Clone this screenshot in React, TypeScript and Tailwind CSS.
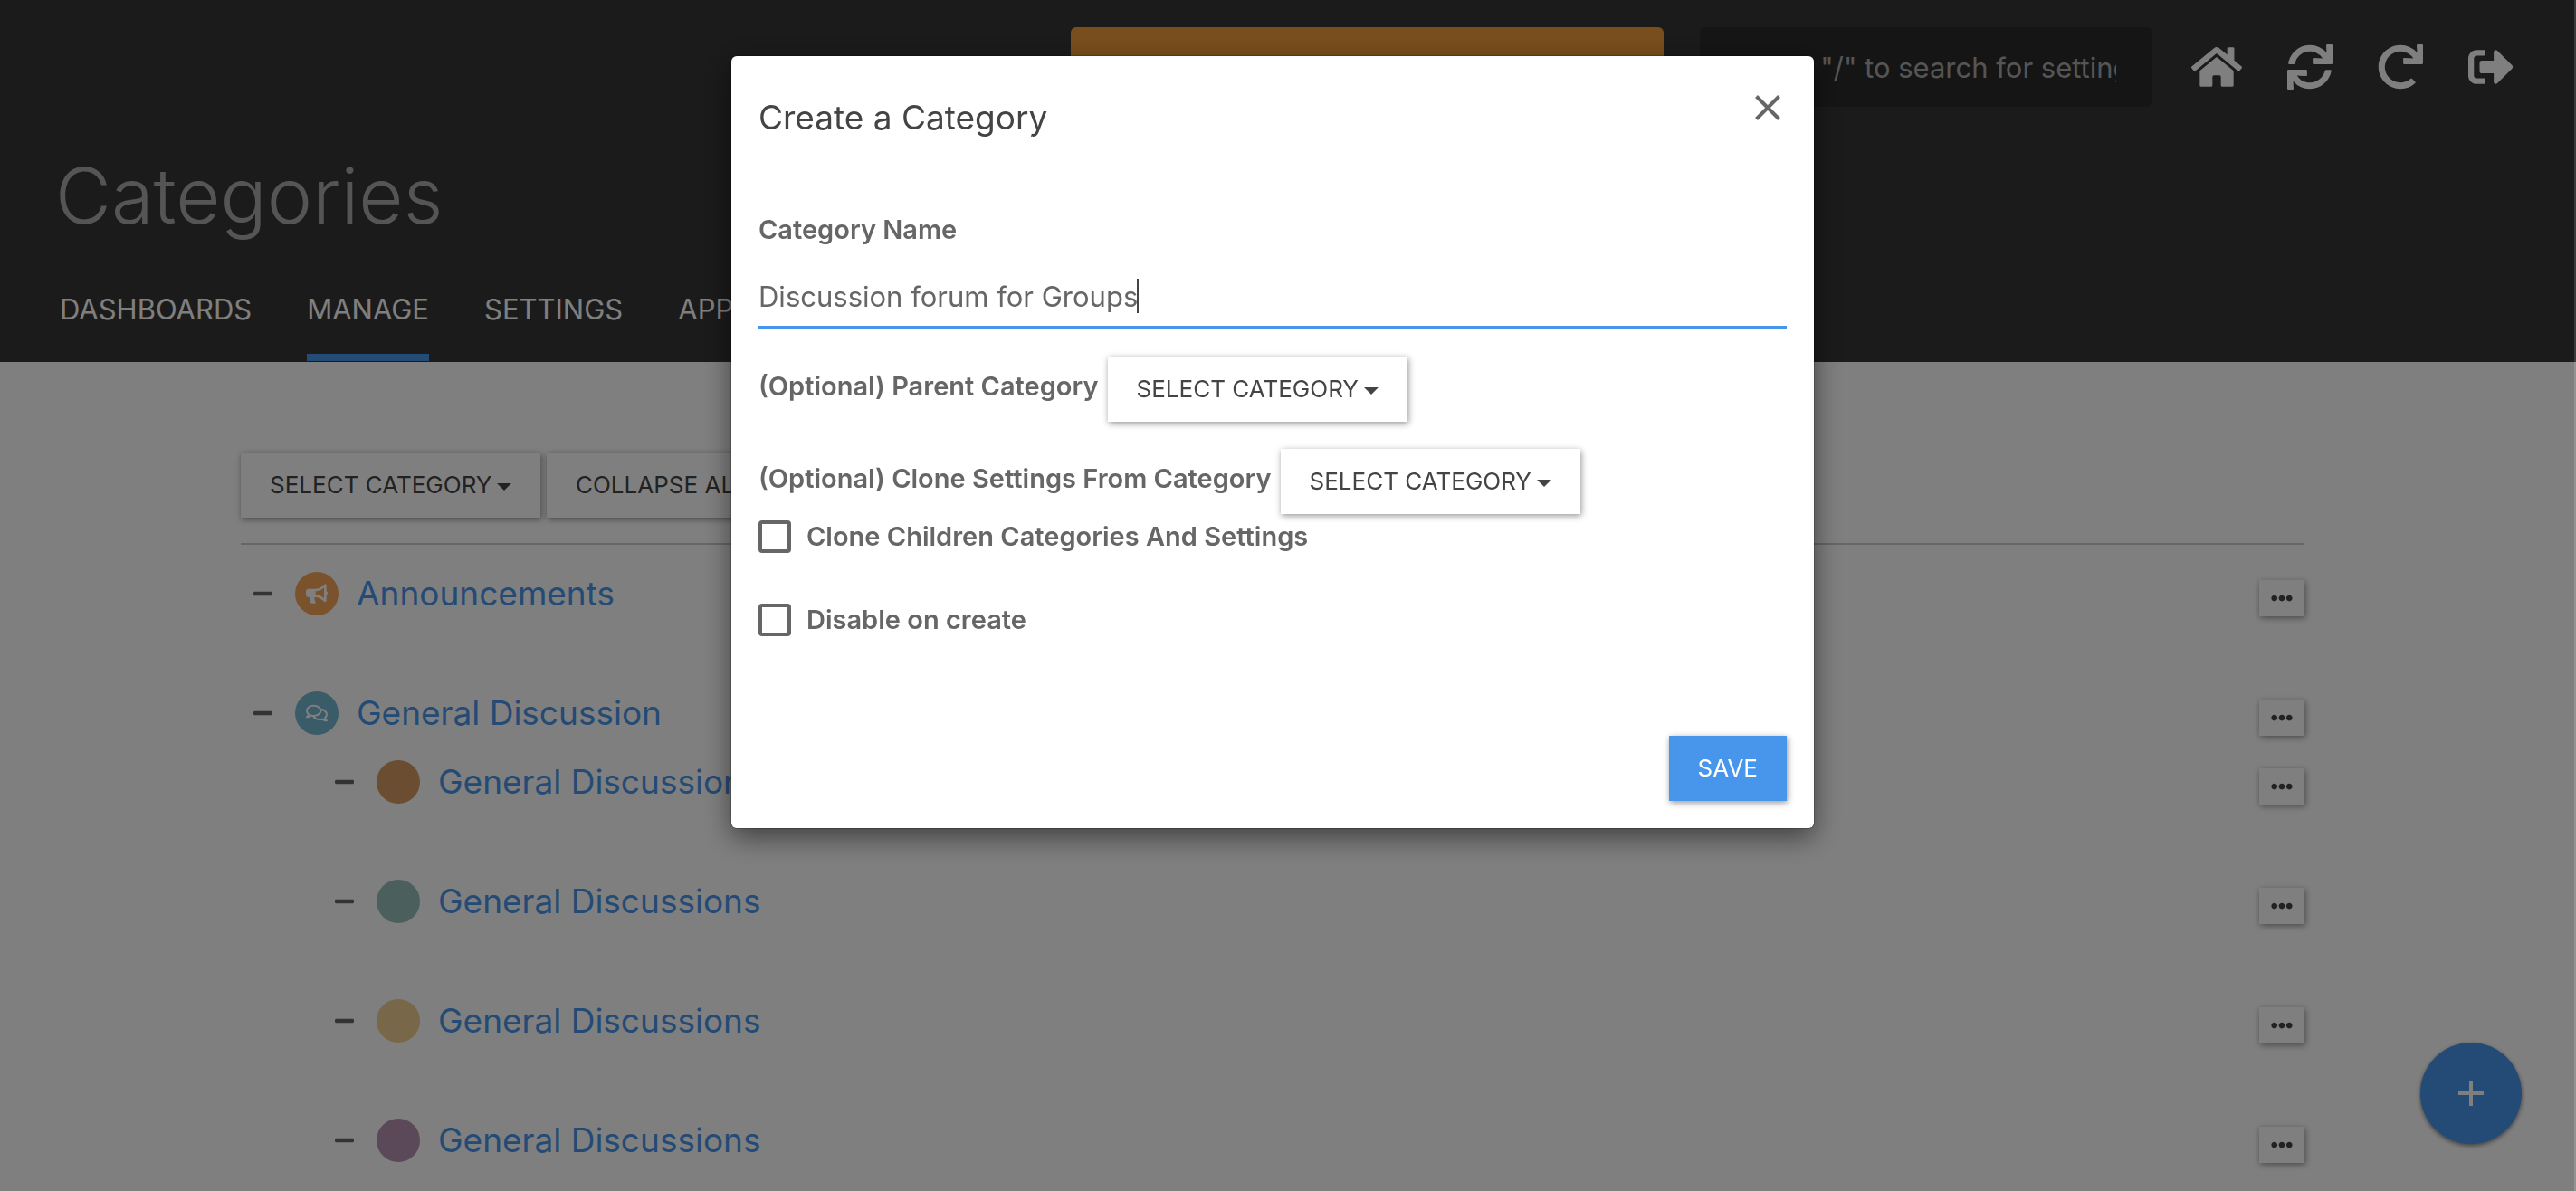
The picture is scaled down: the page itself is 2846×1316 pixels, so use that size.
import React from "react";
import {
  FaBullhorn,
  FaEllipsisH,
  FaHome,
  FaMinus,
  FaRedo,
  FaRegComments,
  FaSignOutAlt,
  FaSync,
} from "react-icons/fa";
import { MdAdd } from "react-icons/md";

const raised = "shadow-[1px_2px_7px_rgba(0,0,0,0.42)]";

function CategorySelect({ id, label }: { id: string; label?: string }) {
  return (
    <div className={`relative h-[72px] bg-white text-[#444444] ${raised}`}>
      <select
        id={id}
        aria-label={label}
        className="h-full cursor-pointer appearance-none bg-transparent pr-[53px] pb-0.5 pl-8 text-[26px]"
      >
        <option>SELECT CATEGORY</option>
      </select>
      <svg
        aria-hidden="true"
        viewBox="0 0 16 8"
        className="pointer-events-none absolute top-[34px] right-8 h-2 w-4"
      >
        <path d="M0 0h16L8 8z" fill="currentColor" />
      </svg>
    </div>
  );
}

type Category = {
  name: string;
  color: string;
  icon?: React.ReactNode;
  child?: boolean;
  tight?: boolean;
};

const categories: Category[] = [
  { name: "Announcements", color: "bg-[#f5a459]", icon: <FaBullhorn size={24} /> },
  { name: "General Discussion", color: "bg-[#74b6d0]", icon: <FaRegComments size={24} />, tight: true },
  { name: "General Discussions", color: "bg-[#d69a64]", child: true },
  { name: "General Discussions", color: "bg-[#96c0b8]", child: true },
  { name: "General Discussions", color: "bg-[#f0ce90]", child: true },
  { name: "General Discussions", color: "bg-[#b692b2]", child: true, tight: true },
];

function CategoryRow({ name, color, icon, child, tight }: Category) {
  return (
    <li
      className={`flex h-[76px] items-center ${child ? "pl-[104px]" : "pl-[14px]"} ${tight ? "" : "mb-14"}`}
    >
      <button aria-label={`Toggle ${name}`} className="text-[#666666]">
        <FaMinus size={24} className="w-[21px]" />
      </button>
      <span
        className={`ml-[25px] flex size-12 items-center justify-center rounded-full text-white ${color}`}
      >
        {icon}
      </span>
      <a href="#" className="ml-5 text-[37px] leading-[44px] text-[#4896eb]">
        {name}
      </a>
      <button
        aria-label={`${name} options`}
        className={`mt-[10px] ml-auto flex h-10 w-[50px] items-center justify-center bg-white text-[#444444] ${raised}`}
      >
        <FaEllipsisH size={24} />
      </button>
    </li>
  );
}

function TopBar() {
  return (
    <div className="flex h-[88px] items-center justify-end pr-[69px]">
      <button className="mr-10 h-full w-[655px] rounded-md bg-[#f49c39]" aria-label="Update available" />
      <input
        type="text"
        aria-label="Search for settings"
        placeholder={'Type "/" to search for settings'}
        className="h-full w-[500px] rounded-md bg-[#2b2b2b] pr-10 pl-[52px] text-[31px] text-white placeholder:text-[#aaaaaa]"
      />
      <div className="ml-[43px] flex items-center gap-[50px] text-white">
        <a href="#" aria-label="Home"><FaHome className="h-[50px] w-14" /></a>
        <a href="#" aria-label="Rebuild"><FaSync size={50} /></a>
        <a href="#" aria-label="Restart"><FaRedo size={50} /></a>
        <a href="#" aria-label="Log out"><FaSignOutAlt size={50} /></a>
      </div>
    </div>
  );
}

const tabs = ["DASHBOARDS", "MANAGE", "SETTINGS", "APPEARANCE"];

function Header() {
  return (
    <header className="bg-[#363636] pt-[30px] pb-px">
      <TopBar />
      <h1 className="mt-[51px] ml-[61px] text-[85px] leading-[96px] font-light text-[#aaaaaa]">
        Categories
      </h1>
      <nav className="mt-[61px] ml-[66px] flex gap-[61px]">
        {tabs.map((tab) => (
          <a
            key={tab}
            href="#"
            className={`border-b-8 pb-[33px] text-[31px] leading-8 text-white ${tab === "MANAGE" ? "border-[#4896eb]" : "border-transparent"}`}
          >
            {tab}
          </a>
        ))}
      </nav>
    </header>
  );
}

function CheckField({ id, label }: { id: string; label: string }) {
  return (
    <div className="flex items-center gap-[17px]">
      <input id={id} type="checkbox" className="size-9 appearance-none rounded border-4 border-[#666666] bg-white" />
      <label htmlFor={id} className="text-[29px] leading-9 font-semibold">{label}</label>
    </div>
  );
}

function CreateDialog() {
  return (
    <div
      role="dialog"
      aria-modal="true"
      aria-labelledby="dialog-title"
      className="mt-[62px] w-full max-w-[1196px] rounded-md bg-white px-[30px] pt-[43px] pb-[30px] text-[#666666] shadow-[0_10px_30px_rgba(0,0,0,0.5),0_0_0_1px_rgba(0,0,0,0.2)]"
    >
      <div className="flex items-start justify-between pr-[7px]">
        <h2 id="dialog-title" className="pt-[3px] text-[37px] leading-[44px] text-[#444444]">
          Create a Category
        </h2>
        <button aria-label="Close">
          <svg viewBox="0 0 28 28" className="size-7" fill="none" stroke="currentColor" strokeWidth="4">
            <path d="M1.5 1.5l25 25M26.5 1.5l-25 25" />
          </svg>
        </button>
      </div>

      <label htmlFor="name" className="mt-[82px] block text-[29px] leading-10 font-semibold">
        Category Name
      </label>
      <div className="relative mt-[34px]">
        <input
          id="name"
          defaultValue="Discussion forum for Groups"
          className="block h-14 w-full border-b-4 border-[#4896eb] bg-transparent pb-3.5 text-[31px] leading-10 caret-transparent outline-none"
        />
        <span aria-hidden="true" className="absolute top-0 left-[418px] h-[38px] w-0.5 bg-[#444444]" />
      </div>

      <div className="mt-[30px] flex items-center gap-[10px]">
        <label htmlFor="parent" className="pb-1.5 text-[29px] leading-10 font-semibold">
          (Optional) Parent Category
        </label>
        <CategorySelect id="parent" />
      </div>
      <div className="mt-[30px] mb-[7px] flex items-center gap-[10px]">
        <label htmlFor="clone" className="pb-1.5 text-[29px] leading-10 font-semibold">
          (Optional) Clone Settings From Category
        </label>
        <CategorySelect id="clone" />
      </div>
      <div className="flex flex-col gap-14">
        <CheckField id="children" label="Clone Children Categories And Settings" />
        <CheckField id="disable" label="Disable on create" />
      </div>

      <div className="mt-[110px] flex justify-end">
        <button className={`h-[72px] bg-[#4896eb] px-8 pb-0.5 text-[26px] text-white ${raised}`}>SAVE</button>
      </div>
    </div>
  );
}

export default function App() {
  return (
    <div className="h-screen overflow-hidden bg-white font-[Inter,sans-serif]">
      <Header />
      <main className="pt-[100px] pr-[34px]">
        <div className="mx-auto max-w-[2280px]">
          <div className="flex gap-[7px]">
            <CategorySelect id="jump" label="Jump to category" />
            <button className={`h-[72px] bg-white px-8 pb-0.5 text-[26px] text-[#444444] ${raised}`}>
              COLLAPSE ALL
            </button>
          </div>
          <hr className="mt-7 border-t-2 border-[#cccccc]" />
          <ul className="pt-4">
            {categories.map((category, i) => (
              <CategoryRow key={i} {...category} />
            ))}
          </ul>
        </div>
      </main>

      <button
        aria-label="Create a category"
        className="fixed right-[60px] bottom-[52px] flex size-28 items-center justify-center rounded-full bg-[#4896eb] text-white shadow-[0_2px_5px_rgba(0,0,0,0.5)]"
      >
        <MdAdd size={48} />
      </button>

      <div className="fixed inset-0 flex items-start justify-center border-r-2 border-white/15 bg-black/50 pr-8">
        <CreateDialog />
      </div>
    </div>
  );
}
